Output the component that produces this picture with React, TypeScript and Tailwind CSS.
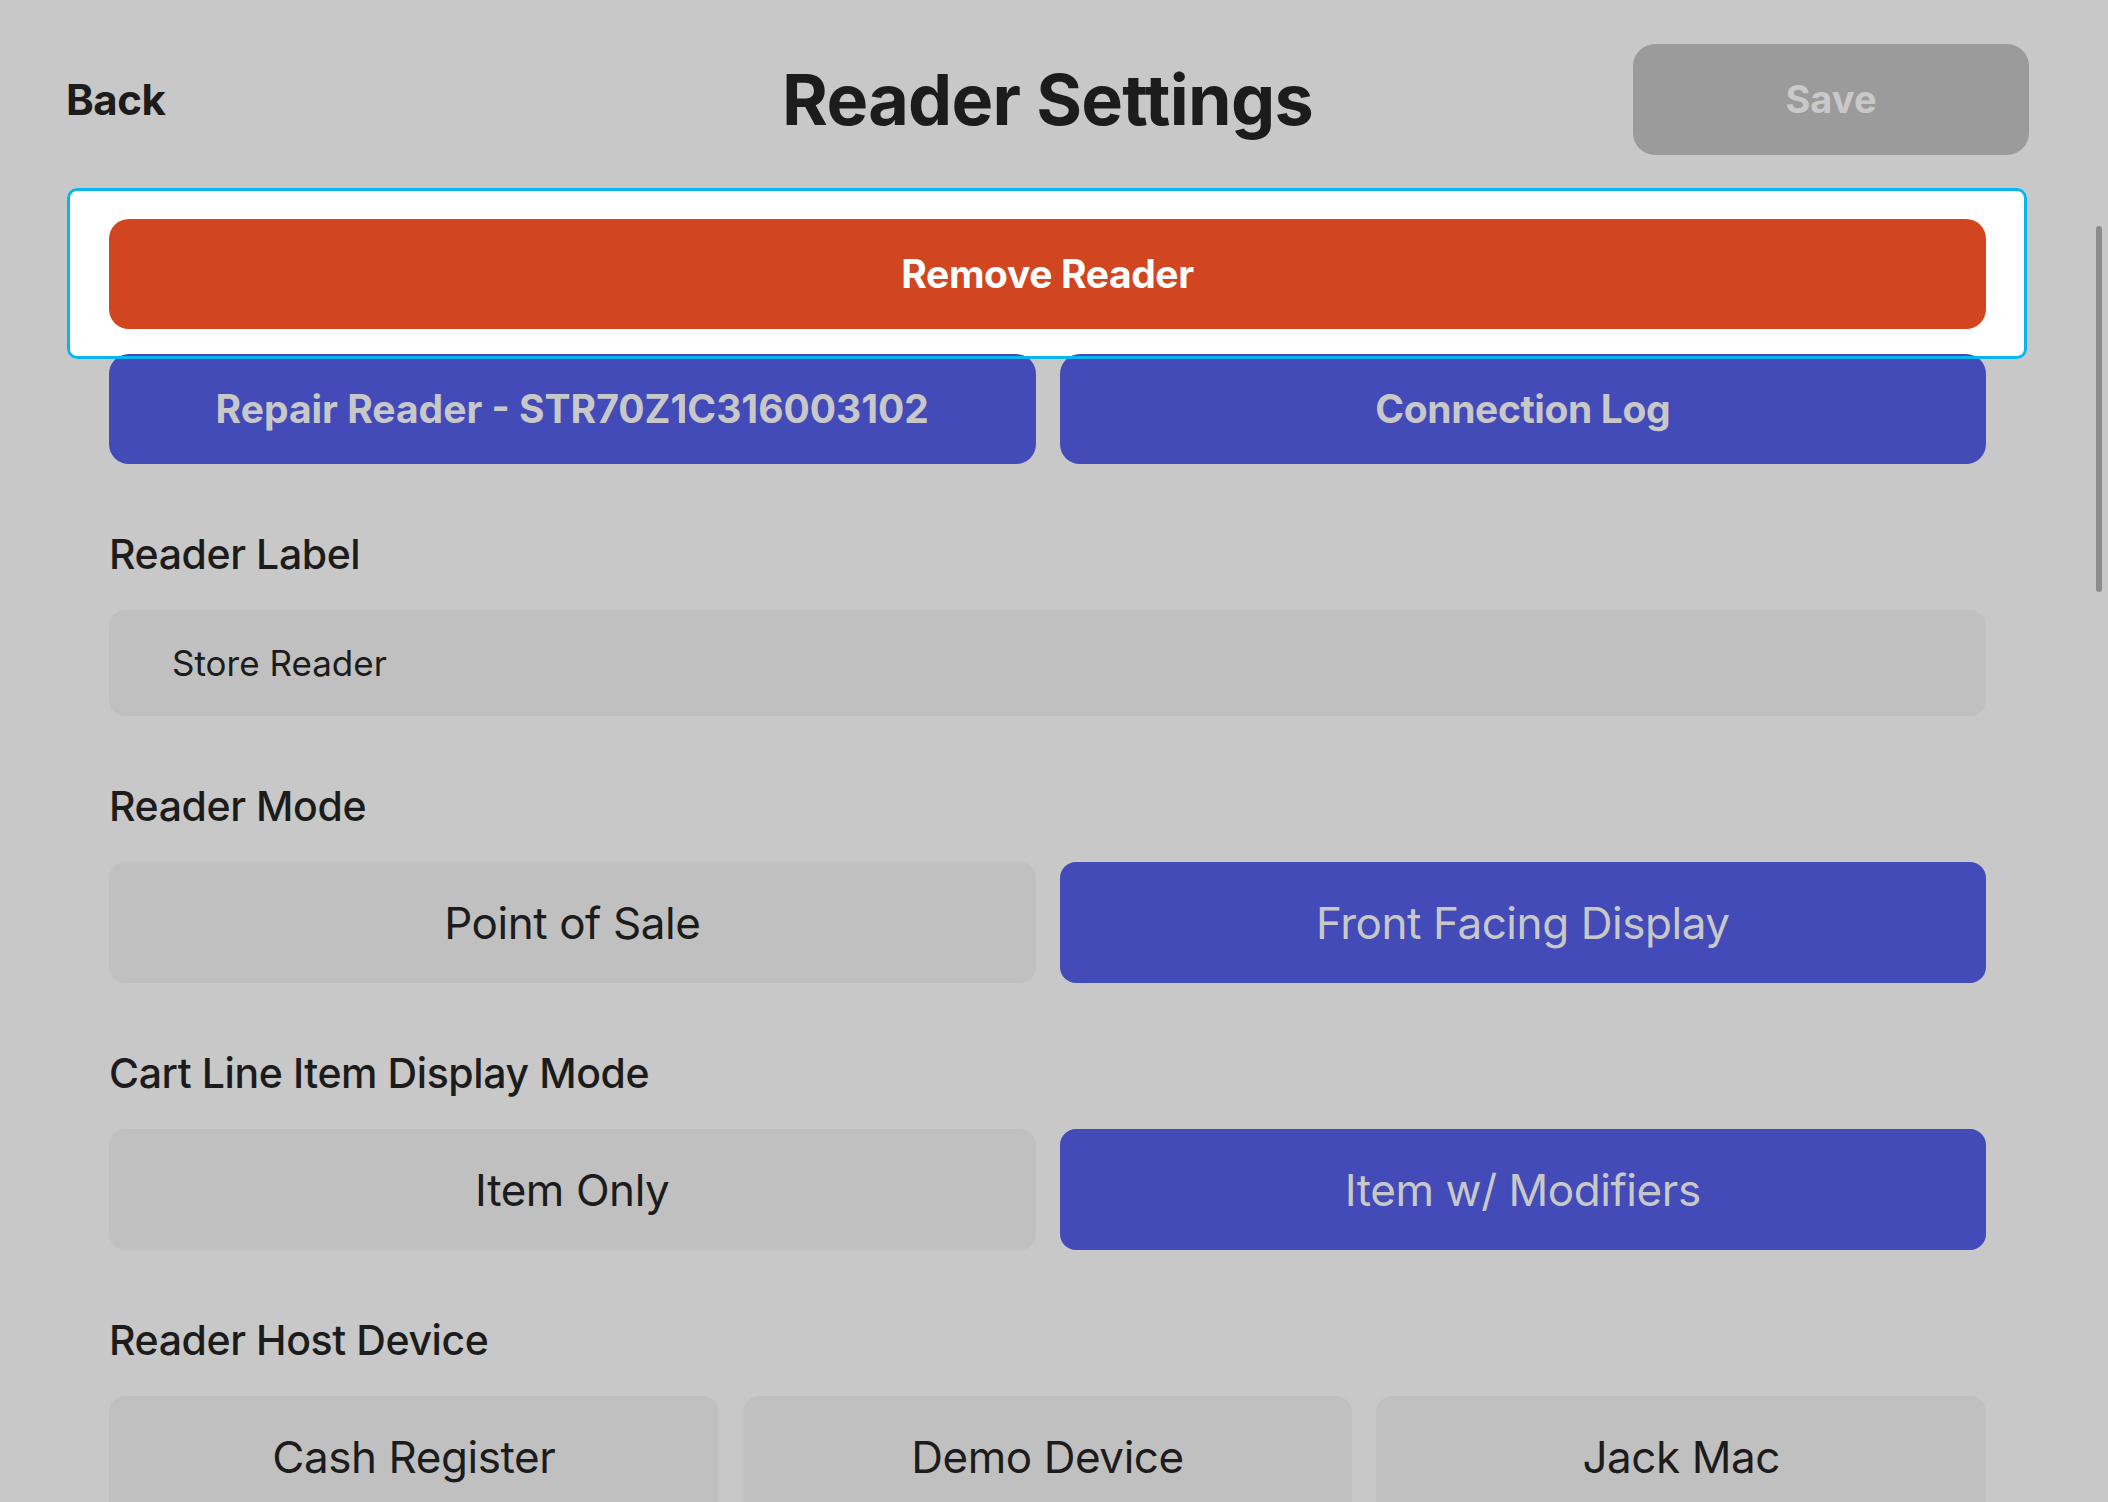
import React from 'react';

const font = { fontFamily: 'Inter, "Noto Sans", sans-serif' };

const SectionLabel = ({ children }: { children: React.ReactNode }) => (
  <div className="mt-[66px] mb-[32px] text-[41px] leading-[48px] font-medium text-[#1c1c1c] tracking-[-0.01em]">
    {children}
  </div>
);

const Choice = ({ label, active }: { label: string; active?: boolean }) => (
  <button
    className={
      active
        ? 'h-[121px] rounded-[16px] bg-[#434bb8] text-[#c8c8c8] text-[44px] tracking-[-0.01em]'
        : 'h-[121px] rounded-[16px] bg-[#c0c0c0] text-[#1c1c1c] text-[44px] tracking-[-0.01em]'
    }
  >
    {label}
  </button>
);

const App = () => {
  const hosts = ['Cash Register', 'Demo Device', 'Jack Mac'];

  return (
    <div style={font} className="relative h-[1502px] w-full overflow-hidden bg-[#c8c8c8]">
      {/* header */}
      <div className="flex items-center pt-[44px] pl-[66px] pr-[79px]">
        <div className="flex-1 basis-0">
          <span className="text-[42px] font-bold text-[#1c1c1c] tracking-[-0.01em]">Back</span>
        </div>
        <h1 className="text-[70px] font-bold text-[#1c1c1c] tracking-[-0.01em] leading-none">Reader Settings</h1>
        <div className="flex flex-1 basis-0 justify-end">
          <button className="h-[111px] w-[396px] rounded-[22px] bg-[#9b9b9b] text-[38px] font-bold text-[#c9c9c9]">
            Save
          </button>
        </div>
      </div>

      <div className="ml-[109px] w-[1877px]">
        <div className="relative mt-[64px]">
          <div className="absolute -top-[31px] -bottom-[30px] -left-[42px] -right-[41px] rounded-[10px] bg-white" />
          <div className="absolute -top-[31px] -bottom-[30px] -left-[42px] -right-[41px] z-20 rounded-[10px] border-[3px] border-[#0ab4ee]" />
          <button className="relative z-10 h-[110px] w-full rounded-[20px] bg-[#d14520] text-[39px] font-bold text-white tracking-[-0.01em]">
            Remove Reader
          </button>
        </div>

        <div className="relative z-10 mt-[25px] grid grid-cols-2 gap-[24px]">
          <button className="h-[110px] rounded-[20px] bg-[#434bb8] text-[39px] font-bold text-[#c8c8c8]">
            Repair Reader - STR70Z1C316003102
          </button>
          <button className="h-[110px] rounded-[20px] bg-[#434bb8] text-[39px] font-bold text-[#c8c8c8] tracking-[-0.01em]">
            Connection Log
          </button>
        </div>

        <SectionLabel>Reader Label</SectionLabel>
        <div className="flex h-[106px] items-center rounded-[16px] bg-[#c0c0c0] pl-[63px] text-[35px] text-[#1c1c1c]">
          Store Reader
        </div>

        <SectionLabel>Reader Mode</SectionLabel>
        <div className="grid grid-cols-2 gap-[24px]">
          <Choice label="Point of Sale" />
          <Choice label="Front Facing Display" active />
        </div>

        <SectionLabel>Cart Line Item Display Mode</SectionLabel>
        <div className="grid grid-cols-2 gap-[24px]">
          <Choice label="Item Only" />
          <Choice label="Item w/ Modifiers" active />
        </div>

        <SectionLabel>Reader Host Device</SectionLabel>
        <div className="grid grid-cols-3 gap-[24px]">
          {hosts.map((h) => (
            <Choice key={h} label={h} />
          ))}
        </div>
      </div>

      {/* overlay scrollbar */}
      <div className="absolute right-[6px] top-[226px] h-[366px] w-[6px] rounded-full bg-[#8c8c8c]" />
    </div>
  );
};

export default App;
